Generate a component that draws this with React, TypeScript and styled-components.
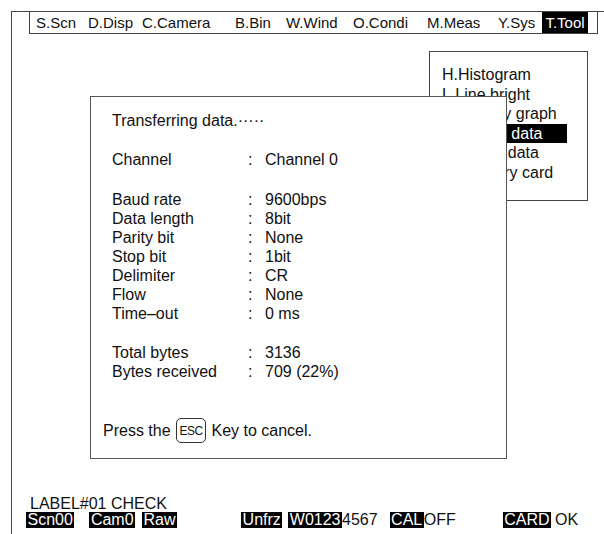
import React from "react";
import styled, { createGlobalStyle } from "styled-components";

const GlobalStyle = createGlobalStyle`
  html, body {
    margin: 0;
    background: #fff;
  }
  body {
    font-family: "Liberation Sans", Arial, sans-serif;
    color: #111;
  }
`;

const Screen = styled.div`
  width: 604px;
  height: 534px;
  box-sizing: border-box;
  padding: 11px 0 0 11px;
  overflow: hidden;
  font-size: 16px;
`;

const Frame = styled.div`
  height: 100%;
  box-sizing: border-box;
  border-left: 1px solid #444;
  border-top: 1px solid #444;
  padding-left: 17px;
  display: flex;
  flex-direction: column;
`;

const MenuBar = styled.nav`
  margin: -1px 6px 0 0;
  height: 23px;
  box-sizing: border-box;
  border: 1px solid #444;
  padding-left: 6px;
  display: grid;
  grid-template-columns: 52px 54px 93px 51px 67px 74px 71px 44px 46px;
  align-items: center;
  font-size: 15px;
`;

const MenuItem = styled.div<{ $active?: boolean }>`
  position: relative;
  height: 21px;
  line-height: 21px;
  white-space: nowrap;
  ${(p) =>
    p.$active &&
    `
    background: #000;
    color: #fff;
    text-align: center;
  `}
`;

const Dropdown = styled.div`
  position: absolute;
  right: 0;
  top: calc(100% + 18px);
  width: 159px;
  height: 150px;
  box-sizing: border-box;
  border: 1px solid #444;
  background: #fff;
  color: #111;
  padding: 13px 0 0 10px;
  text-align: left;
  font-size: 16px;
`;

const DropItem = styled.div<{ $active?: boolean }>`
  width: 127px;
  height: 19.5px;
  line-height: 19.5px;
  padding-left: 2px;
  box-sizing: border-box;
  background: ${(p) => (p.$active ? "#000" : "transparent")};
  color: ${(p) => (p.$active ? "#fff" : "#111")};
`;

const Dialog = styled.section`
  position: relative;
  z-index: 2;
  margin: 62px 0 0 61px;
  width: 417px;
  height: 363px;
  box-sizing: border-box;
  border: 1px solid #555;
  background: #fff;
  padding: 14px 0 15px 21px;
  display: flex;
  flex-direction: column;
`;

const Block = styled.div<{ $gap?: number }>`
  margin-top: ${(p) => p.$gap ?? 0}px;
  display: grid;
  grid-template-columns: 135px 18px auto;
  grid-auto-rows: 19px;
  align-items: center;
`;

const Title = styled.div`
  height: 19px;
  line-height: 19px;
`;

const Colon = styled.span`
  padding-left: 1px;
`;

const PressLine = styled.div`
  margin: auto 0 0 -9px;
  display: flex;
  align-items: center;
  height: 25px;
  white-space: pre;
`;

const Key = styled.span`
  display: inline-flex;
  align-items: center;
  justify-content: center;
  width: 30px;
  height: 25px;
  box-sizing: border-box;
  border: 1px solid #333;
  border-radius: 5px;
  font-size: 12px;
  letter-spacing: -0.5px;
  margin: 0 1px;
`;

const Footer = styled.footer`
  margin-top: auto;
  padding-bottom: 6px;
`;

const LabelLine = styled.div`
  height: 16px;
  line-height: 16px;
  padding-left: 1px;
`;

const StatusRow = styled.div`
  display: flex;
  height: 16px;
  line-height: 16px;
  margin-left: -3px;
`;

const Chip = styled.span<{ $gap?: number }>`
  margin-left: ${(p) => p.$gap ?? 0}px;
  background: #000;
  color: #fff;
  padding: 0 1.5px;
`;

const Plain = styled.span<{ $gap?: number }>`
  margin-left: ${(p) => p.$gap ?? 0}px;
`;

const menu = ["S.Scn", "D.Disp", "C.Camera", "B.Bin", "W.Wind", "O.Condi", "M.Meas", "Y.Sys"];

const tools = [
  "H.Histogram",
  "L.Line bright",
  "D.Density graph",
  "O.Output data",
  "E.Export data",
  "M.Memory card",
];

const settings: [string, string][] = [
  ["Baud rate", "9600bps"],
  ["Data length", "8bit"],
  ["Parity bit", "None"],
  ["Stop bit", "1bit"],
  ["Delimiter", "CR"],
  ["Flow", "None"],
  ["Time\u2013out", "0 ms"],
];

const totals: [string, string][] = [
  ["Total bytes", "3136"],
  ["Bytes received", "709 (22%)"],
];

function Rows({ rows }: { rows: [string, string][] }) {
  return (
    <>
      {rows.map(([k, v]) => (
        <React.Fragment key={k}>
          <span>{k}</span>
          <Colon>:</Colon>
          <span>{v}</span>
        </React.Fragment>
      ))}
    </>
  );
}

export default function App() {
  return (
    <Screen>
      <GlobalStyle />
      <Frame>
        <MenuBar>
          {menu.map((m) => (
            <MenuItem key={m}>{m}</MenuItem>
          ))}
          <MenuItem $active>
            T.Tool
            <Dropdown>
              {tools.map((t, i) => (
                <DropItem key={t} $active={i === 3}>
                  {t}
                </DropItem>
              ))}
            </Dropdown>
          </MenuItem>
        </MenuBar>

        <Dialog>
          <Title>Transferring data.·····</Title>
          <Block $gap={20}>
            <Rows rows={[["Channel", "Channel 0"]]} />
          </Block>
          <Block $gap={21}>
            <Rows rows={settings} />
          </Block>
          <Block $gap={20}>
            <Rows rows={totals} />
          </Block>
          <PressLine>
            Press the <Key>ESC</Key> Key to cancel.
          </PressLine>
        </Dialog>

        <Footer>
          <LabelLine>LABEL#01 CHECK</LabelLine>
          <StatusRow>
            <Chip>Scn00</Chip>
            <Chip $gap={15}>Cam0</Chip>
            <Chip $gap={7}>Raw</Chip>
            <Chip $gap={64}>Unfrz</Chip>
            <Chip $gap={6}>W0123</Chip>
            <Plain>4567</Plain>
            <Chip $gap={12}>CAL</Chip>
            <Plain>OFF</Plain>
            <Chip $gap={47}>CARD</Chip>
            <Plain $gap={4}>OK</Plain>
          </StatusRow>
        </Footer>
      </Frame>
    </Screen>
  );
}
